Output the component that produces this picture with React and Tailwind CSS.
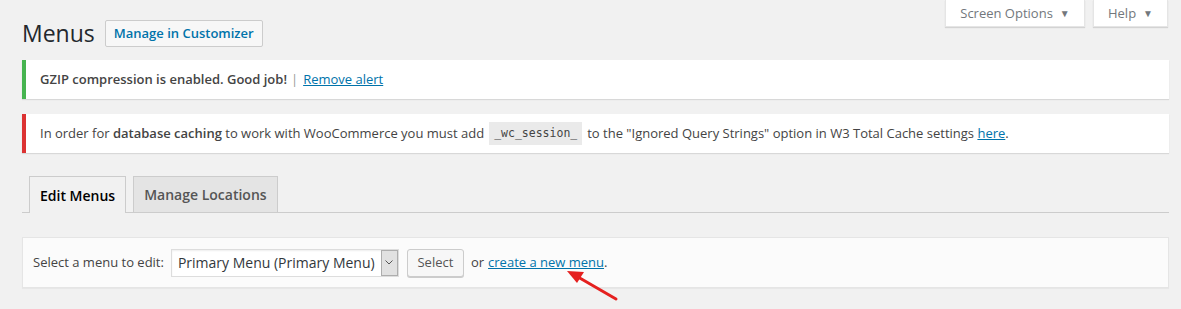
import React from "react";

export default function App() {
  return (
    <div className="relative w-[1181px] h-[309px] bg-[#f1f1f1] overflow-hidden text-[13px] text-[#444]" style={{ fontFamily: '"Open Sans", "Noto Sans", sans-serif' }}>
      {/* top-right tabs */}
      <div className="absolute top-0 right-[13px] flex gap-[8px]">
        <div className="h-[27px] w-[140px] bg-white flex items-center justify-center gap-[7px] text-[#72777c] shadow-[0_1px_1px_rgba(0,0,0,0.12)] border-x border-b border-[#e5e5e5] pt-[1px]">
          <span>Screen Options</span>
          <span className="text-[10px]">▼</span>
        </div>
        <div className="h-[27px] w-[75px] bg-white flex items-center justify-center gap-[7px] text-[#72777c] shadow-[0_1px_1px_rgba(0,0,0,0.12)] border-x border-b border-[#e5e5e5] pt-[1px]">
          <span>Help</span>
          <span className="text-[10px]">▼</span>
        </div>
      </div>

      <div className="pl-[22px] pr-[12px] pt-[20px]">
        {/* Title */}
        <div className="flex items-center h-[27px]">
          <h1 className="text-[23px] leading-[27px] text-[#23282d] font-normal">Menus</h1>
          <div className="ml-[10px] h-[27px] px-[8px] flex items-center border border-[#ccc] bg-[#f7f7f7] text-[#0073aa] font-semibold text-[13px] rounded-[2px]">
            Manage in Customizer
          </div>
        </div>

        {/* Notice 1 */}
        <div className="mt-[13px] h-[39px] bg-white border-l-4 border-[#46b450] shadow-[0_1px_1px_rgba(0,0,0,0.1)] flex items-center pl-[14px]">
          <span className="font-semibold text-[#444]">GZIP compression is enabled. Good job!</span>
          <span className="ml-[4px] text-[#999]">|</span>
          <span className="ml-[5px] text-[#0073aa] underline">Remove alert</span>
        </div>

        {/* Notice 2 */}
        <div className="mt-[15px] h-[39px] bg-white border-l-4 border-[#dc3232] shadow-[0_1px_1px_rgba(0,0,0,0.1)] flex items-center pl-[14px] text-[#444]">
          <span>In order for <b className="font-semibold">database caching</b> to work with WooCommerce you must add</span>
          <code className="ml-[5px] mr-[5px] px-[5px] py-[3px] bg-[#eaeaea] text-[11.5px] text-[#444]" style={{ fontFamily: '"DejaVu Sans Mono", monospace' }}>_wc_session_</code>
          <span>to the "Ignored Query Strings" option in W3 Total Cache settings <span className="text-[#0073aa] underline">here</span>.</span>
        </div>

        {/* Tabs */}
        <div className="mt-[24px] flex border-b border-[#ccc] h-[36px] items-end">
          <div className="ml-[7px] px-[10px] flex items-center border border-[#ccc] border-b-0 bg-[#f1f1f1] text-[14px] font-semibold text-[#000] -mb-px h-[37px]">
            Edit Menus
          </div>
          <div className="ml-[7px] h-[36px] px-[10px] flex items-center border border-[#ccc] border-b-0 bg-[#e4e4e4] text-[14px] font-semibold text-[#555]">
            Manage Locations
          </div>
        </div>

        {/* Manage menus */}
        <div className="mt-[24px] h-[51px] bg-[#fbfbfb] border border-[#e5e5e5] shadow-[0_1px_1px_rgba(0,0,0,0.04)] flex items-center pl-[10px]">
          <span className="text-[#444]">Select a menu to edit:</span>
          <div className="ml-[7px] h-[28px] w-[228px] flex items-center bg-white border border-[#ddd] shadow-[inset_0_1px_2px_rgba(0,0,0,0.07)]">
            <span className="pl-[6px] text-[14px] text-[#32373c] flex-1 whitespace-nowrap overflow-hidden">Primary Menu (Primary Menu)</span>
            <div className="h-[26px] w-[17px] shrink-0 bg-[#e1e1e1] border border-[#adadad] flex items-center justify-center">
              <svg width="8" height="5" viewBox="0 0 8 5"><path d="M0.5 0.5 L4 4 L7.5 0.5" fill="none" stroke="#555" strokeWidth="1" /></svg>
            </div>
          </div>
          <div className="ml-[8px] h-[28px] w-[57px] justify-center flex items-center border border-[#ccc] bg-[#f7f7f7] rounded-[3px] text-[#555] shadow-[0_1px_0_#ccc]">
            Select
          </div>
          <span className="ml-[7px] text-[#444]">or</span>
          <span className="ml-[4px] text-[#0073aa] underline">create a new menu</span>
          <span>.</span>
        </div>
      </div>

      {/* red arrow */}
      <svg className="absolute left-0 top-0 pointer-events-none" width="1181" height="309">
        <line x1="616" y1="299" x2="578" y2="277" stroke="#e5201f" strokeWidth="3" strokeLinecap="round" />
        <polygon points="567,271 584,272 577,283" fill="#e5201f" />
      </svg>
    </div>
  );
}
